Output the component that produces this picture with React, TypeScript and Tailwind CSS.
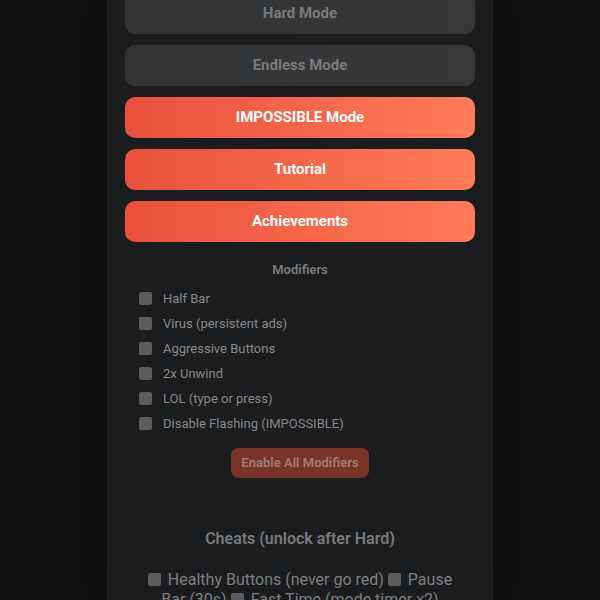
import React from 'react';

const modifiers = [
  'Half Bar',
  'Virus (persistent ads)',
  'Aggressive Buttons',
  '2x Unwind',
  'LOL (type or press)',
  'Disable Flashing (IMPOSSIBLE)',
];

function Box() {
  return <span className="inline-block h-[13px] w-[13px] shrink-0 rounded-[2px] bg-[#5b5c5e]" />;
}

function InlineBox() {
  return <span className="mr-[7px] inline-block h-[13px] w-[13px] rounded-[2px] bg-[#5b5c5e] align-[-1px]" />;
}

export default function App() {
  return (
    <div
      className="flex h-[600px] w-[600px] justify-center overflow-hidden bg-[#111214]"
      style={{ fontFamily: 'Roboto, "Noto Sans", sans-serif' }}
    >
      <div className="h-full w-[386px] bg-[#1b1c1e] px-[18px] shadow-[0_0_40px_rgba(0,0,0,0.6)]">
        <div className="-mt-[7px] flex flex-col gap-[11px]">
          {['Hard Mode', 'Endless Mode'].map((t) => (
            <button
              key={t}
              className="h-[41px] w-full rounded-[10px] bg-gradient-to-r from-[#323335] to-[#363739] text-[15px] font-bold text-[#7b7b7c]"
            >
              {t}
            </button>
          ))}
          {['IMPOSSIBLE Mode', 'Tutorial', 'Achievements'].map((t) => (
            <button
              key={t}
              className="h-[41px] w-full rounded-[10px] bg-gradient-to-r from-[#e9503b] to-[#ff7b5a] text-[15px] font-bold text-white"
            >
              {t}
            </button>
          ))}
        </div>

        <div className="mt-[19px] text-center text-[13px] font-semibold leading-[18px] text-[#7d7d7e]">
          Modifiers
        </div>
        <div className="mt-[7px] flex flex-col pl-[14px]">
          {modifiers.map((m) => (
            <label key={m} className="flex h-[25px] items-center gap-[11px] text-[13px] text-[#88898a]">
              <Box />
              {m}
            </label>
          ))}
        </div>
        <div className="mt-[12px] flex justify-center">
          <button className="h-[30px] w-[138px] rounded-[8px] bg-[#7a3327] text-[13px] font-bold text-[#9c7b72]">
            Enable All Modifiers
          </button>
        </div>

        <div className="mt-[50px] text-center text-[16px] font-semibold leading-[22px] text-[#7a7a7b]">
          Cheats (unlock after Hard)
        </div>
        <div className="mt-[20px] px-[20px] text-center text-[16px] leading-[20px] text-[#7e7f80]">
          <InlineBox />
          Healthy Buttons (never go red){' '}
          <InlineBox />
          Pause Bar (30s){' '}
          <InlineBox />
          Fast Time (mode timer x2)
        </div>
      </div>
    </div>
  );
}
